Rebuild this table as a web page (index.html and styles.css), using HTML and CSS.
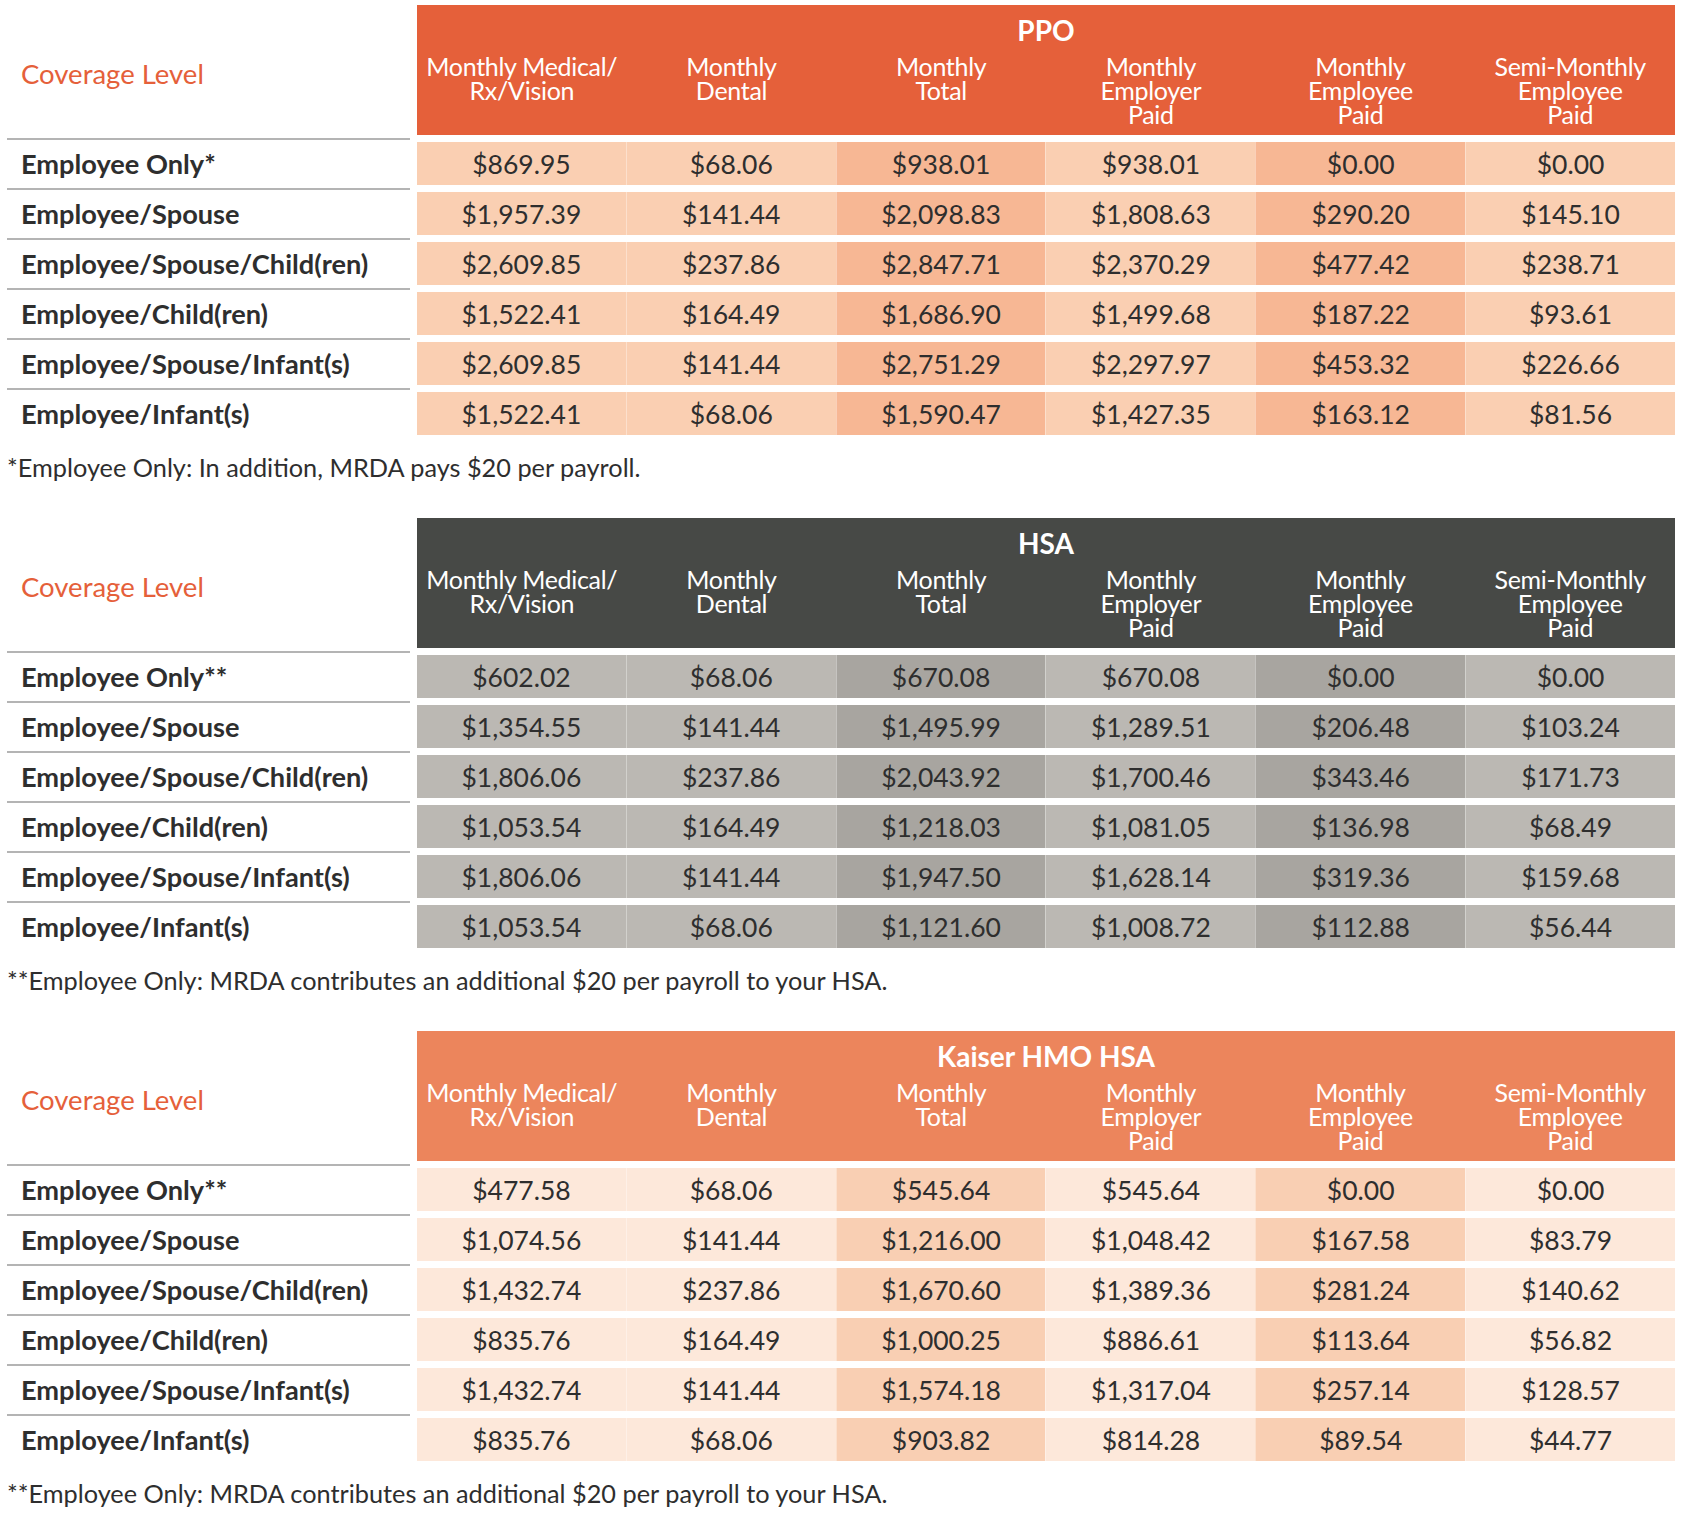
FILE: index.html
```html
<!DOCTYPE html>
<html lang="en">
<head>
<meta charset="utf-8">
<title>Coverage Rates</title>
<link rel="stylesheet" href="styles.css">
</head>
<body>
<section class="plan plan-ppo">
  <div class="head">
    <div class="label-head">Coverage Level</div>
    <div class="band">
      <div class="band-title">PPO</div>
      <div class="cols">
        <div class="col">Monthly Medical/<br>Rx/Vision</div>
        <div class="col">Monthly<br>Dental</div>
        <div class="col">Monthly<br>Total</div>
        <div class="col">Monthly<br>Employer<br>Paid</div>
        <div class="col">Monthly<br>Employee<br>Paid</div>
        <div class="col">Semi-Monthly<br>Employee<br>Paid</div>
      </div>
    </div>
  </div>
  <div class="row"><div class="label">Employee Only*</div><div class="cells"><div class="c">$869.95</div><div class="c">$68.06</div><div class="c d">$938.01</div><div class="c">$938.01</div><div class="c d">$0.00</div><div class="c">$0.00</div></div></div>
  <div class="row"><div class="label">Employee/Spouse</div><div class="cells"><div class="c">$1,957.39</div><div class="c">$141.44</div><div class="c d">$2,098.83</div><div class="c">$1,808.63</div><div class="c d">$290.20</div><div class="c">$145.10</div></div></div>
  <div class="row"><div class="label">Employee/Spouse/Child(ren)</div><div class="cells"><div class="c">$2,609.85</div><div class="c">$237.86</div><div class="c d">$2,847.71</div><div class="c">$2,370.29</div><div class="c d">$477.42</div><div class="c">$238.71</div></div></div>
  <div class="row"><div class="label">Employee/Child(ren)</div><div class="cells"><div class="c">$1,522.41</div><div class="c">$164.49</div><div class="c d">$1,686.90</div><div class="c">$1,499.68</div><div class="c d">$187.22</div><div class="c">$93.61</div></div></div>
  <div class="row"><div class="label">Employee/Spouse/Infant(s)</div><div class="cells"><div class="c">$2,609.85</div><div class="c">$141.44</div><div class="c d">$2,751.29</div><div class="c">$2,297.97</div><div class="c d">$453.32</div><div class="c">$226.66</div></div></div>
  <div class="row"><div class="label">Employee/Infant(s)</div><div class="cells"><div class="c">$1,522.41</div><div class="c">$68.06</div><div class="c d">$1,590.47</div><div class="c">$1,427.35</div><div class="c d">$163.12</div><div class="c">$81.56</div></div></div>
  <p class="note">*Employee Only: In addition, MRDA pays $20 per payroll.</p>
</section>

<section class="plan plan-hsa">
  <div class="head">
    <div class="label-head">Coverage Level</div>
    <div class="band">
      <div class="band-title">HSA</div>
      <div class="cols">
        <div class="col">Monthly Medical/<br>Rx/Vision</div>
        <div class="col">Monthly<br>Dental</div>
        <div class="col">Monthly<br>Total</div>
        <div class="col">Monthly<br>Employer<br>Paid</div>
        <div class="col">Monthly<br>Employee<br>Paid</div>
        <div class="col">Semi-Monthly<br>Employee<br>Paid</div>
      </div>
    </div>
  </div>
  <div class="row"><div class="label">Employee Only**</div><div class="cells"><div class="c">$602.02</div><div class="c">$68.06</div><div class="c d">$670.08</div><div class="c">$670.08</div><div class="c d">$0.00</div><div class="c">$0.00</div></div></div>
  <div class="row"><div class="label">Employee/Spouse</div><div class="cells"><div class="c">$1,354.55</div><div class="c">$141.44</div><div class="c d">$1,495.99</div><div class="c">$1,289.51</div><div class="c d">$206.48</div><div class="c">$103.24</div></div></div>
  <div class="row"><div class="label">Employee/Spouse/Child(ren)</div><div class="cells"><div class="c">$1,806.06</div><div class="c">$237.86</div><div class="c d">$2,043.92</div><div class="c">$1,700.46</div><div class="c d">$343.46</div><div class="c">$171.73</div></div></div>
  <div class="row"><div class="label">Employee/Child(ren)</div><div class="cells"><div class="c">$1,053.54</div><div class="c">$164.49</div><div class="c d">$1,218.03</div><div class="c">$1,081.05</div><div class="c d">$136.98</div><div class="c">$68.49</div></div></div>
  <div class="row"><div class="label">Employee/Spouse/Infant(s)</div><div class="cells"><div class="c">$1,806.06</div><div class="c">$141.44</div><div class="c d">$1,947.50</div><div class="c">$1,628.14</div><div class="c d">$319.36</div><div class="c">$159.68</div></div></div>
  <div class="row"><div class="label">Employee/Infant(s)</div><div class="cells"><div class="c">$1,053.54</div><div class="c">$68.06</div><div class="c d">$1,121.60</div><div class="c">$1,008.72</div><div class="c d">$112.88</div><div class="c">$56.44</div></div></div>
  <p class="note">**Employee Only: MRDA contributes an additional $20 per payroll to your HSA.</p>
</section>

<section class="plan plan-kaiser">
  <div class="head">
    <div class="label-head">Coverage Level</div>
    <div class="band">
      <div class="band-title">Kaiser HMO HSA</div>
      <div class="cols">
        <div class="col">Monthly Medical/<br>Rx/Vision</div>
        <div class="col">Monthly<br>Dental</div>
        <div class="col">Monthly<br>Total</div>
        <div class="col">Monthly<br>Employer<br>Paid</div>
        <div class="col">Monthly<br>Employee<br>Paid</div>
        <div class="col">Semi-Monthly<br>Employee<br>Paid</div>
      </div>
    </div>
  </div>
  <div class="row"><div class="label">Employee Only**</div><div class="cells"><div class="c">$477.58</div><div class="c">$68.06</div><div class="c d">$545.64</div><div class="c">$545.64</div><div class="c d">$0.00</div><div class="c">$0.00</div></div></div>
  <div class="row"><div class="label">Employee/Spouse</div><div class="cells"><div class="c">$1,074.56</div><div class="c">$141.44</div><div class="c d">$1,216.00</div><div class="c">$1,048.42</div><div class="c d">$167.58</div><div class="c">$83.79</div></div></div>
  <div class="row"><div class="label">Employee/Spouse/Child(ren)</div><div class="cells"><div class="c">$1,432.74</div><div class="c">$237.86</div><div class="c d">$1,670.60</div><div class="c">$1,389.36</div><div class="c d">$281.24</div><div class="c">$140.62</div></div></div>
  <div class="row"><div class="label">Employee/Child(ren)</div><div class="cells"><div class="c">$835.76</div><div class="c">$164.49</div><div class="c d">$1,000.25</div><div class="c">$886.61</div><div class="c d">$113.64</div><div class="c">$56.82</div></div></div>
  <div class="row"><div class="label">Employee/Spouse/Infant(s)</div><div class="cells"><div class="c">$1,432.74</div><div class="c">$141.44</div><div class="c d">$1,574.18</div><div class="c">$1,317.04</div><div class="c d">$257.14</div><div class="c">$128.57</div></div></div>
  <div class="row"><div class="label">Employee/Infant(s)</div><div class="cells"><div class="c">$835.76</div><div class="c">$68.06</div><div class="c d">$903.82</div><div class="c">$814.28</div><div class="c d">$89.54</div><div class="c">$44.77</div></div></div>
  <p class="note">**Employee Only: MRDA contributes an additional $20 per payroll to your HSA.</p>
</section>
</body>
</html>
```

FILE: styles.css
```css
* { box-sizing: border-box; }

html, body {
  margin: 0;
  background: #ffffff;
}

body {
  padding: 5px 6px 0 7px;
  font-family: Lato, "Open Sans", sans-serif;
  color: #2e2e2e;
}

.head {
  display: flex;
  height: 130px;
}

.label-head {
  width: 403px;
  margin-right: 7px;
  display: flex;
  align-items: center;
  padding-left: 14px;
  padding-top: 6px;
  font-size: 27.5px;
  color: #e5603a;
}

.band {
  flex: 1;
  padding-top: 10px;
  color: #ffffff;
}

.band-title {
  text-align: center;
  font-weight: 700;
  font-size: 28px;
  line-height: 30px;
  height: 39px;
}

.cols {
  display: flex;
}

.col {
  flex: 1;
  text-align: center;
  font-size: 25px;
  line-height: 24px;
  letter-spacing: -0.3px;
}

.row {
  display: flex;
  height: 43px;
  margin-top: 7px;
}

.label {
  width: 403px;
  margin-right: 7px;
  margin-top: -4px;
  border-top: 2px solid #b4b4b4;
  display: flex;
  align-items: center;
  padding-left: 14px;
  padding-top: 2px;
  font-weight: 700;
  font-size: 27.2px;
}

.cells {
  flex: 1;
  display: flex;
}

.c {
  flex: 1;
  display: flex;
  align-items: center;
  justify-content: center;
  padding-top: 1px;
  font-size: 26.5px;
  border-left: 1px solid rgba(255, 255, 255, 0.35);
}

.c:first-child {
  border-left: none;
}

.note {
  margin: 0;
  height: 83px;
  padding-top: 17px;
  font-size: 25.3px;
  line-height: 30px;
}

.plan-ppo .band { background: #e5603a; }
.plan-ppo .c { background: #facfb2; }
.plan-ppo .c.d { background: #f7b794; }

.plan-hsa .band { background: #474946; }
.plan-hsa .c { background: #bbb8b3; }
.plan-hsa .c.d { background: #a8a5a0; }

.plan-kaiser .band { background: #ec855c; }
.plan-kaiser .c { background: #fde8da; }
.plan-kaiser .c.d { background: #f9cfb3; }
```
